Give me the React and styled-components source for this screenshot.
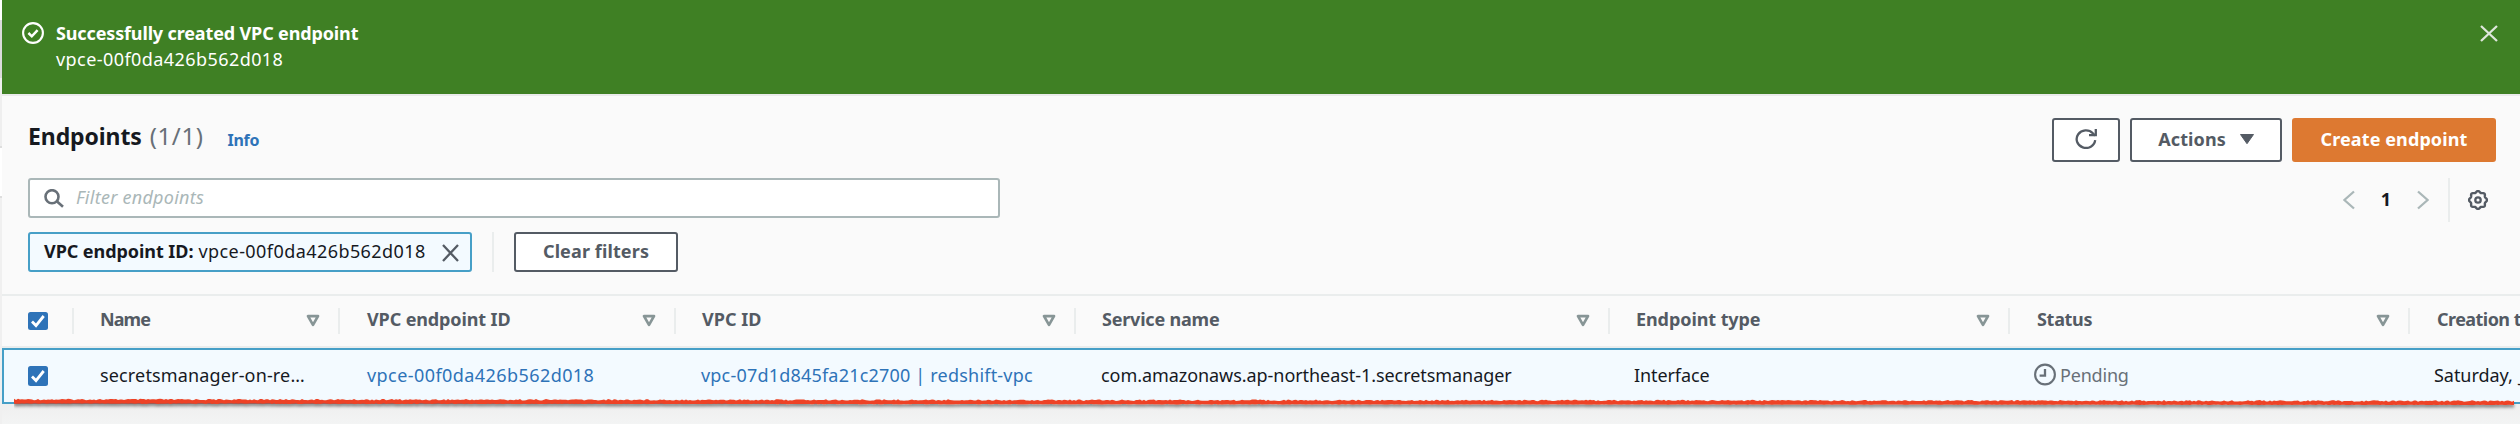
import React from "react";
import styled, { createGlobalStyle } from "styled-components";

const GlobalStyle = createGlobalStyle`
  *, *::before, *::after { box-sizing: border-box; }
  body {
    margin: 0;
    overflow: hidden;
    background: #f2f3f3;
    font: 18px/26px "Noto Sans", "Open Sans", sans-serif;
    color: #16191f;
  }
  svg { display: block; flex: none; }
`;

const Page = styled.div`
  display: flex;
  width: 2520px;
  height: 424px;
  overflow: hidden;
`;

const NavEdge = styled.div`
  flex: none;
  width: 2px;
  background: linear-gradient(
    #fff 0 20px, #dcdcdc 20px 78px, #efefef 78px 146px, #dedede 146px 148px,
    #fff 148px 196px, #dedede 196px 198px, #f0f0f0 198px
  );
`;

const Main = styled.main`
  display: flex;
  flex-direction: column;
  width: 2518px;
`;

const Text = styled.span`
  font-weight: ${(p) => (p.$bold ? 700 : 400)};
  letter-spacing: ${(p) => p.$track || 0}px;
  white-space: nowrap;
`;

const Banner = styled.section`
  display: flex;
  align-items: flex-start;
  height: 94px;
  flex: none;
  padding: 20px 22px 0 20px;
  background: #3f8024;
  color: #fff;
`;

const BannerText = styled.div`
  display: flex;
  flex-direction: column;
  flex: 1;
  margin-left: 12px;
`;

const BannerIcon = styled.div`
  margin-top: 2px;
`;

const BannerClose = styled.div`
  margin-top: 5px;
`;

const Header = styled.header`
  flex: none;
  height: 202px;
  padding: 22px 24px 0 26px;
  background: #fafafa;
  border-top: 2px solid #eaebeb;
  border-bottom: 2px solid #eaeded;
`;

const TitleRow = styled.div`
  display: flex;
  justify-content: space-between;
  height: 60px;
`;

const Title = styled.h1`
  display: flex;
  align-items: baseline;
  margin: 0;
  padding: 2px 0 0;
  font-size: 23px;
  line-height: 32px;
`;

const Count = styled(Text)`
  margin-left: 8px;
  font-size: 24px;
  color: #687078;
`;

const InfoLink = styled(Text)`
  position: relative;
  top: 1px;
  margin-left: 24px;
  font-size: 16px;
  color: #2e73b8;
`;

const ButtonGroup = styled.div`
  display: flex;
  gap: 10px;
`;

const Button = styled.button`
  display: flex;
  align-items: center;
  justify-content: center;
  gap: ${(p) => p.$gap || 0}px;
  width: ${(p) => p.$width}px;
  height: ${(p) => (p.$small ? 40 : 44)}px;
  padding: 0 0 2px;
  font: inherit;
  color: ${(p) => (p.$primary ? "#fff" : "#545b64")};
  background: ${(p) => (p.$primary ? "#dd7931" : "#fff")};
  border: 2px solid ${(p) => (p.$primary ? "#dd7931" : "#545b64")};
  border-radius: 3px;
`;

const SearchRow = styled.div`
  display: flex;
  justify-content: space-between;
  align-items: flex-start;
  height: 54px;
`;

const SearchBox = styled.div`
  display: flex;
  align-items: center;
  width: 972px;
  height: 40px;
  padding: 0 0 2px 14px;
  gap: 12px;
  background: #fff;
  border: 2px solid #aab7b8;
  border-radius: 3px;
  color: #aab7b8;
  font-style: italic;
`;

const SearchIcon = styled.div`
  padding-top: 3px;
`;

const Pagination = styled.div`
  display: flex;
  align-items: center;
  height: 44px;
  padding-right: 8px;
`;

const PageNumber = styled(Text)`
  width: 62px;
  padding-bottom: 2px;
  text-align: center;
`;

const Divider = styled.div`
  flex: none;
  width: 2px;
  height: ${(p) => p.$height}px;
  margin: 0 ${(p) => p.$after}px 0 ${(p) => p.$before}px;
  background: #eaeded;
`;

const FilterRow = styled.div`
  display: flex;
`;

const Token = styled.div`
  display: flex;
  align-items: center;
  width: 444px;
  height: 40px;
  padding: 0 11px 2px 14px;
  background: #f3faff;
  border: 2px solid #469fc7;
  border-radius: 3px;
`;

const TokenValue = styled(Text)`
  flex: 1;
  margin-left: 5px;
`;

const TokenClose = styled.div`
  padding-top: 3px;
`;

const HeadRow = styled.div`
  flex: none;
  display: grid;
  grid-template-columns: 72px 266px 336px 400px 534px 400px 400px 400px;
  height: 52px;
  padding-top: 12px;
  background: #fafafa;
  border-bottom: 2px solid #eaeded;
`;

const HeadCell = styled.div`
  display: flex;
  justify-content: space-between;
  height: 26px;
  padding: 0 18px 0 ${(p) => p.$pad}px;
  border-right: 2px solid #eaeded;
  color: #545b64;
`;

const HeadLabel = styled(Text)`
  position: relative;
  top: -2px;
`;

const SortIcon = styled.div`
  padding-top: 6px;
`;

const BodyRow = styled.div`
  position: relative;
  flex: none;
  display: grid;
  grid-template-columns: 70px 266px 336px 400px 534px 400px 400px 400px;
  width: 2530px;
  height: 56px;
  background: #f3faff;
  border: 2px solid #469fc7;
`;

const Cell = styled.div`
  display: flex;
  align-items: center;
  padding: 0 0 2px ${(p) => p.$pad}px;
  color: ${(p) => p.$color || "#16191f"};
`;

const StatusText = styled(Text)`
  margin-left: 4px;
`;

const DateText = styled(Text)`
  word-spacing: 2px;
`;

const CheckSlot = styled.div`
  display: flex;
  height: ${(p) => (p.$body ? 52 : 26)}px;
  padding: ${(p) => (p.$body ? "16px 0 0 24px" : "4px 0 0 26px")};
  border-right: ${(p) => (p.$body ? "0" : "2px solid #eaeded")};
`;

const Scribble = styled.svg`
  position: absolute;
  left: 10px;
  top: 46px;
`;

const Below = styled.div`
  flex: 1;
  background: linear-gradient(#efefef, #f3f4f4);
`;

const Close = ({ w, h, color }) => (
  <svg width={w} height={h} viewBox={`0 0 ${w} ${h}`}>
    <path d={`M1 1L${w - 1} ${h - 1}M${w - 1} 1L1 ${h - 1}`} stroke={color} strokeWidth="2.3" fill="none" />
  </svg>
);

const Check = ({ h = 20 }) => (
  <svg width="20" height={h} viewBox={`0 0 20 ${h}`}>
    <rect width="20" height={h} rx="2.5" fill="#2e73b8" />
    <path d={`M4 ${h / 2 + 0.6}L8 ${h / 2 + 4.6}L15.7 ${h / 2 - 5}`} stroke="#fff" strokeWidth="2.8" fill="none" />
  </svg>
);

const Chevron = ({ right }) => (
  <svg width="12" height="20" viewBox="0 0 12 20">
    <path d={right ? "M1 1.5L10.6 10L1 18.5" : "M11 1.5L1.4 10L11 18.5"} stroke="#aab7b8" strokeWidth="2.3" fill="none" />
  </svg>
);

const gearPoints = Array.from({ length: 96 }, (_, i) => {
  const a = (i / 96) * Math.PI * 2;
  const r = 8.3 + 0.75 * Math.cos(8 * a);
  return `${(10 + r * Math.cos(a)).toFixed(2)},${(10 + r * Math.sin(a)).toFixed(2)}`;
}).join(" ");

const Gear = () => (
  <svg width="20" height="20" viewBox="0 0 20 20" fill="none" stroke="#545b64">
    <polygon points={gearPoints} strokeWidth="2.4" />
    <circle cx="10" cy="10" r="2.7" strokeWidth="2.3" />
  </svg>
);

const noise = (i) => {
  const n = Math.sin(i * 12.9898) * 43758.5453;
  return n - Math.floor(n);
};

const STEPS = 1250;
const strokeTop = Array.from({ length: STEPS + 1 }, (_, i) => {
  const y = 2.7 + (i / STEPS) * 1.6 + noise(i) * 1.5;
  return `${2 + i * 2},${y.toFixed(1)}`;
});
const strokeBottom = Array.from({ length: STEPS + 1 }, (_, i) => {
  const k = STEPS - i;
  const y = 7.4 + (k / STEPS) * 1.3 + noise(k + 4000) * 0.4;
  return `${2 + k * 2},${y.toFixed(1)}`;
});

const Underline = () => (
  <Scribble width="2508" height="22" viewBox="0 0 2508 22">
    <defs>
      <filter id="soft" x="-1%" y="-100%" width="102%" height="400%">
        <feDropShadow dx="0" dy="2.5" stdDeviation="1.7" floodColor="#000" floodOpacity="0.45" />
      </filter>
    </defs>
    <g filter="url(#soft)" transform="translate(-2 0)">
      <polygon points={[...strokeTop, ...strokeBottom].join(" ")} fill="#ee4225" />
    </g>
  </Scribble>
);

const columns = [
  { label: "Name", track: -0.9, pad: 26 },
  { label: "VPC endpoint ID", track: -0.12, pad: 27 },
  { label: "VPC ID", track: 0.05, pad: 26 },
  { label: "Service name", track: -0.2, pad: 26 },
  { label: "Endpoint type", track: -0.08, pad: 26 },
  { label: "Status", track: -0.3, pad: 27 },
  { label: "Creation time", track: -0.55, pad: 27 },
];

export default function App() {
  return (
    <>
      <GlobalStyle />
      <Page>
        <NavEdge />
        <Main>
          <Banner>
            <BannerIcon>
              <svg width="22" height="22" viewBox="0 0 22 22" fill="none" stroke="#fff" strokeWidth="2.1">
                <circle cx="11" cy="11" r="9.9" />
                <path d="M6.4 11L9.8 14.3L15.6 8.2" strokeWidth="2.5" />
              </svg>
            </BannerIcon>
            <BannerText>
              <Text $bold $track={-0.14}>Successfully created VPC endpoint</Text>
              <Text $track={0.43}>vpce-00f0da426b562d018</Text>
            </BannerText>
            <BannerClose><Close w={18} h={17} color="#dfe6dc" /></BannerClose>
          </Banner>
          <Header>
            <TitleRow>
              <Title>
                <Text $bold $track={-0.1}>Endpoints</Text>
                <Count $track={0.6}>(1/1)</Count>
                <InfoLink $bold $track={-0.3}>Info</InfoLink>
              </Title>
              <ButtonGroup>
                <Button $width={68}>
                  <svg width="22" height="20" viewBox="0 0 22 20" fill="none" stroke="#545b64" strokeWidth="2.3">
                    <path d="M20.2 11.2A9.3 8.8 0 1 1 17.8 4.2L20 6.6" />
                    <path d="M20.8 0V6.2H14" />
                  </svg>
                </Button>
                <Button $width={152} $gap={14}>
                  <Text $bold $track={0.1}>Actions</Text>
                  <svg width="14" height="10" viewBox="0 0 14 10">
                    <path d="M0.5 0.5H13.5L7 9.7Z" fill="#545b64" stroke="#545b64" strokeLinejoin="round" />
                  </svg>
                </Button>
                <Button $width={204} $primary><Text $bold $track={0.1}>Create endpoint</Text></Button>
              </ButtonGroup>
            </TitleRow>
            <SearchRow>
              <SearchBox>
                <SearchIcon>
                  <svg width="20" height="19" viewBox="0 0 20 19" fill="none" stroke="#687078" strokeWidth="2.6">
                    <circle cx="8" cy="7.7" r="6.5" />
                    <path d="M12.8 12.2L19 17.8" />
                  </svg>
                </SearchIcon>
                <Text $track={0.26}>Filter endpoints</Text>
              </SearchBox>
              <Pagination>
                <Chevron />
                <PageNumber $bold>1</PageNumber>
                <Chevron right />
                <Divider $height={44} $before={19} $after={18} />
                <Gear />
              </Pagination>
            </SearchRow>
            <FilterRow>
              <Token>
                <Text $bold $track={-0.06}>VPC endpoint ID:</Text>
                <TokenValue $track={0.43}>vpce-00f0da426b562d018</TokenValue>
                <TokenClose><Close w={17} h={18} color="#545b64" /></TokenClose>
              </Token>
              <Divider $height={40} $before={20} $after={20} />
              <Button $small $width={164}><Text $bold $track={0.12}>Clear filters</Text></Button>
            </FilterRow>
          </Header>
          <HeadRow>
            <CheckSlot><Check h={18} /></CheckSlot>
            {columns.map((c) => (
              <HeadCell key={c.label} $pad={c.pad}>
                <HeadLabel $bold $track={c.track}>{c.label}</HeadLabel>
                <SortIcon>
                  <svg width="14" height="13" viewBox="0 0 14 13">
                    <path d="M2 2.1H12L7 10.8Z" fill="none" stroke="#879596" strokeWidth="2.7" strokeLinejoin="round" />
                  </svg>
                </SortIcon>
              </HeadCell>
            ))}
          </HeadRow>
          <BodyRow>
            <CheckSlot $body><Check /></CheckSlot>
            <Cell $pad={26}><Text $track={0.15}>secretsmanager-on-re…</Text></Cell>
            <Cell $pad={27} $color="#2e73b8"><Text $track={0.43}>vpce-00f0da426b562d018</Text></Cell>
            <Cell $pad={25} $color="#2e73b8"><Text $track={0.2}>vpc-07d1d845fa21c2700 | redshift-vpc</Text></Cell>
            <Cell $pad={25}><Text $track={-0.06}>com.amazonaws.ap-northeast-1.secretsmanager</Text></Cell>
            <Cell $pad={24}><Text $track={-0.1}>Interface</Text></Cell>
            <Cell $pad={24} $color="#687078">
              <svg width="22" height="24" viewBox="0 0 22 24" fill="none" stroke="#687078" strokeWidth="2.1">
                <circle cx="11" cy="11.5" r="9.9" />
                <path d="M11 6V12.6H5.6" strokeWidth="2.3" />
              </svg>
              <StatusText $track={-0.2}>Pending</StatusText>
            </Cell>
            <Cell $pad={24}><DateText $track={-0.05}>Saturday, January</DateText></Cell>
            <Underline />
          </BodyRow>
          <Below />
        </Main>
      </Page>
    </>
  );
}
